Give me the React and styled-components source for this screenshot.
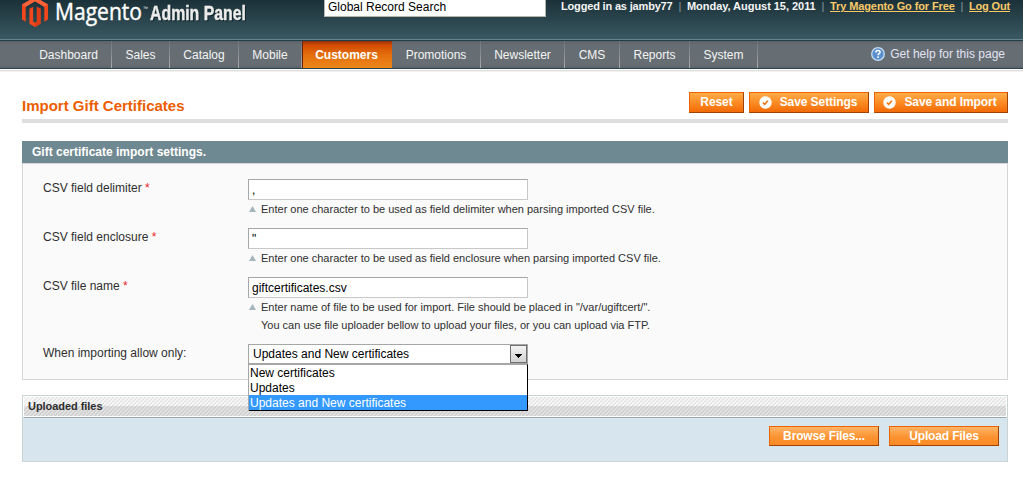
import * as React from 'react';
import styled, { createGlobalStyle } from 'styled-components';

const NAV_ITEMS = [
  { label: 'Dashboard', width: 86 },
  { label: 'Sales', width: 58 },
  { label: 'Catalog', width: 69 },
  { label: 'Mobile', width: 63 },
  { label: 'Customers', width: 90, active: true },
  { label: 'Promotions', width: 89 },
  { label: 'Newsletter', width: 84 },
  { label: 'CMS', width: 55 },
  { label: 'Reports', width: 70 },
  { label: 'System', width: 68 },
];

const OPTIONS = ['New certificates', 'Updates', 'Updates and New certificates'];

function Logo() {
  return (
    <LogoSvg viewBox="0 0 226 30" role="img">
      <g transform="translate(-2 -3) scale(1.25)">
        <path
          fill="#f1471d"
          d="M22.391 6v12l-2.969 1.714V7.713L12 3.43 4.574 7.713v12.001L1.609 18V6L12 0z"
        />
        <path fill="#f8623a" d="M12 0l10.391 6-2.969 1.713L12 3.43 4.574 7.713 1.609 6z" />
        <path
          fill="#f1471d"
          d="M12 24l-4.455-2.572v-12l2.97-1.715v12.001l1.485.902 1.485-.902V7.713l2.971 1.715v12z"
        />
        <path fill="#dc3c16" d="M12 20.616l1.485-.902V7.713l2.971 1.715v12L12 24z" />
      </g>
      <text
        x="33"
        y="20"
        fill="#fff"
        stroke="#fff"
        strokeWidth="0.4"
        fontFamily="'Open Sans', sans-serif"
        fontSize="23"
        textLength="87"
        lengthAdjust="spacingAndGlyphs"
      >
        Magento
      </text>
      <text x="121" y="10" fill="#fff" fontFamily="'Liberation Sans', sans-serif" fontSize="5">
        ™
      </text>
      <AdminText
        x="128"
        y="20"
        fontFamily="'Liberation Sans Narrow', 'Liberation Sans', sans-serif"
        fontSize="20"
        fontWeight="bold"
        textLength="96"
        lengthAdjust="spacingAndGlyphs"
      >
        Admin Panel
      </AdminText>
    </LogoSvg>
  );
}

function CheckIcon() {
  return (
    <svg width="13" height="13" viewBox="0 0 13 13">
      <circle cx="6.5" cy="6.5" r="6.2" fill="#fff" />
      <path d="M4 6.6l1.7 1.7 3.2-3.6" fill="none" stroke="#ef7a1a" strokeWidth="1.7" />
    </svg>
  );
}

function HelpIcon() {
  return (
    <HelpSvg viewBox="0 0 14 14">
      <circle cx="7" cy="7" r="6.3" fill="#5b8fcd" stroke="#c3dcf5" strokeWidth="1.3" />
      <path
        d="M4.9 5.4c0-1.4 1-2 2.1-2s2.1.7 2.1 1.8c0 1.5-2 1.5-2 3M7.1 9.3v1.6"
        fill="none"
        stroke="#fff"
        strokeWidth="1.5"
      />
    </HelpSvg>
  );
}

function TextField({ label, value, required, children }) {
  return (
    <Row>
      <Label>
        {label} {required && <Required>*</Required>}
      </Label>
      <Control>
        <Input defaultValue={value} />
        {children}
      </Control>
    </Row>
  );
}

function Hint({ children }) {
  return (
    <HintRow>
      <Triangle />
      <div>{children}</div>
    </HintRow>
  );
}

export default function App() {
  return (
    <>
      <GlobalStyle />
      <Header>
        <Logo />
        <Search defaultValue="Global Record Search" />
        <Account>
          <HeaderText $width={112} $spacing={-0.17}>
            Logged in as jamby77
          </HeaderText>
          <Pipe>|</Pipe>
          <HeaderText $width={129} $spacing={-0.04}>
            Monday, August 15, 2011
          </HeaderText>
          <Pipe>|</Pipe>
          <HeaderLink $width={125} $spacing={-0.1}>
            Try Magento Go for Free
          </HeaderLink>
          <Pipe>|</Pipe>
          <HeaderLink $width={41} $spacing={-0.17}>
            Log Out
          </HeaderLink>
        </Account>
      </Header>

      <Nav>
        {NAV_ITEMS.map(({ label, width, active }) => (
          <NavItem key={label} $width={width} $active={active}>
            {label}
          </NavItem>
        ))}
        <Help>
          <HelpIcon />
          Get help for this page
        </Help>
      </Nav>

      <Content>
        <TitleBar>
          <Title>Import Gift Certificates</Title>
          <Button $width={55}>Reset</Button>
          <Button $width={120} $icon>
            <CheckIcon />
            Save Settings
          </Button>
          <Button $width={134} $icon>
            <CheckIcon />
            Save and Import
          </Button>
        </TitleBar>

        <PanelTitle>Gift certificate import settings.</PanelTitle>
        <Panel>
          <TextField label="CSV field delimiter" value="," required>
            <Hint>Enter one character to be used as field delimiter when parsing imported CSV file.</Hint>
          </TextField>
          <TextField label="CSV field enclosure" value={'"'} required>
            <Hint>Enter one character to be used as field enclosure when parsing imported CSV file.</Hint>
          </TextField>
          <TextField label="CSV file name" value="giftcertificates.csv" required>
            <Hint>
              Enter name of file to be used for import. File should be placed in "/var/ugiftcert/".
              <br />
              You can use file uploader bellow to upload your files, or you can upload via FTP.
            </Hint>
          </TextField>
          <Row>
            <Label>When importing allow only:</Label>
            <Select>
              <SelectValue>Updates and New certificates</SelectValue>
              <SelectArrow>
                <svg width="7" height="4" viewBox="0 0 7 4" shapeRendering="crispEdges">
                  <path d="M0 0h7L3.5 4z" />
                </svg>
              </SelectArrow>
              <Menu>
                {OPTIONS.map((option, i) => (
                  <Option key={option} $selected={i === 2}>
                    {option}
                  </Option>
                ))}
              </Menu>
            </Select>
          </Row>
        </Panel>

        <Uploader>
          <UploaderTitle>Uploaded files</UploaderTitle>
          <UploaderBody>
            <Button $width={110} $flat>
              Browse Files...
            </Button>
            <Button $width={110} $flat>
              Upload Files
            </Button>
          </UploaderBody>
        </Uploader>
      </Content>
    </>
  );
}

const GlobalStyle = createGlobalStyle`
  * {
    box-sizing: border-box;
  }
  body {
    margin: 0;
    background: #fff;
    color: #2f2f2f;
    font: 12px/15px "Liberation Sans", Arial, sans-serif;
    overflow: hidden;
  }
`;

const Header = styled.header`
  display: flex;
  align-items: flex-start;
  height: 41px;
  padding: 0 13px 0 22px;
  background: linear-gradient(#1b3139, #3a5962);
  border-bottom: 1px solid #1f3e49;
  box-shadow: inset 0 -1px #66828b;
`;

const LogoSvg = styled.svg`
  flex: none;
  width: 226px;
  height: 30px;
  overflow: visible;
`;

const AdminText = styled.text`
  fill: #ececea;
  stroke: #ececea;
  stroke-width: 0.4px;
  filter: drop-shadow(1px 1px 0 #10242b);
`;

const Search = styled.input`
  flex: none;
  width: 222px;
  height: 18px;
  margin: -1px 0 0 76px;
  padding: 0 3px 2px;
  border: 1px solid #b5b5b0;
  border-top: 0;
  background: #fff;
  color: #000;
  font: 12px/14px "Liberation Sans", Arial, sans-serif;
  letter-spacing: 0;
`;

const Account = styled.div`
  display: flex;
  flex: 1;
  justify-content: flex-end;
  font-size: 11px;
  font-weight: bold;
  line-height: 13px;
  color: #f4f4f4;
`;

const HeaderText = styled.span`
  width: ${({ $width }) => $width}px;
  letter-spacing: ${({ $spacing }) => $spacing}px;
  white-space: nowrap;
`;

const HeaderLink = styled(HeaderText)`
  color: #f9c967;
  text-decoration: underline;
`;

const Pipe = styled.span`
  width: 14px;
  text-align: center;
  font-weight: normal;
  color: #899ba0;
`;

const Nav = styled.nav`
  display: flex;
  height: 31px;
  padding-left: 26px;
  background: linear-gradient(#5c6469, #666e73 4px, #666e73 24px, #5c6368 27px, #29434c 27px, #29434c 28px, #fff 28px, #fff 29px, #dedede 29px, #dedede 30px, #f1f1f1 30px);
`;

const NavItem = styled.a`
  flex: none;
  width: ${({ $width }) => $width}px;
  height: 27px;
  border-right: 1px solid;
  border-image: linear-gradient(#6b7378, #a9aeb1) 1;
  color: #f4f4f4;
  line-height: 28px;
  text-align: center;
  ${({ $active }) =>
    $active && {
      paddingRight: 2,
      border: 0,
      borderLeft: '1px solid #6d1e08',
      background: 'linear-gradient(#913005, #d24b02 4px, #e56e0c 14px, #ec881b)',
      color: '#fff',
      fontWeight: 'bold',
    }}
`;

const Help = styled.a`
  display: flex;
  align-items: center;
  gap: 5px;
  height: 27px;
  margin: 0 18px 0 auto;
  color: #e3e3f4;
`;

const HelpSvg = styled.svg`
  width: 14px;
  height: 14px;
  margin-top: -1px;
`;

const Content = styled.main`
  padding: 20px 15px 0 22px;
`;

const TitleBar = styled.div`
  display: flex;
  gap: 5px;
  height: 31px;
  border-bottom: 4px solid #dfdfdf;
`;

const Title = styled.h1`
  flex: 1;
  margin: 5px 0 0;
  color: #eb5e00;
  font-size: 15px;
  line-height: 18px;
`;

const Button = styled.button`
  display: flex;
  flex: none;
  align-items: center;
  justify-content: center;
  gap: 8px;
  width: ${({ $width }) => $width}px;
  height: ${({ $flat }) => ($flat ? 20 : 21)}px;
  padding: 0 ${({ $icon }) => ($icon ? 2 : 0)}px 1px 0;
  border: 1px solid;
  border-color: #ed6502 #a04300 #a04300 #ed6502;
  background: ${({ $flat }) =>
    $flat
      ? 'linear-gradient(#ffb567, #fb9331 10px, #fb8b24)'
      : 'linear-gradient(#ffac47, #fb8a23 10px, #f36a05)'};
  color: #fff;
  font: bold 12px/16px "Liberation Sans", Arial, sans-serif;
  letter-spacing: ${({ $flat }) => ($flat ? -0.15 : -0.08)}px;
  white-space: nowrap;
`;

const PanelTitle = styled.h2`
  height: 22px;
  margin: 18px 0 0;
  padding-left: 10px;
  background: #6f8992;
  color: #fff;
  font-size: 12px;
  line-height: 22px;
`;

const Panel = styled.section`
  height: 217px;
  padding: 15px 20px 0;
  border: 1px solid #d6d6d6;
  background: #fafafa;
`;

const Row = styled.div`
  display: flex;
  margin-bottom: 10px;
`;

const Label = styled.label`
  flex: 0 0 205px;
  padding-top: 2px;
`;

const Required = styled.span`
  color: #eb2222;
`;

const Control = styled.div`
  flex: 1;
`;

const Input = styled.input`
  display: block;
  width: 280px;
  height: 21px;
  padding: 1px 3px 0;
  border: 1px solid;
  border-color: #a6a6a6 #c8c8c8 #c8c8c8 #a6a6a6;
  border-radius: 0;
  background: #fff;
  color: #000;
  font: 12px/15px "Liberation Sans", Arial, sans-serif;
`;

const HintRow = styled.div`
  display: flex;
  gap: 5px;
  padding-left: 1px;
  font-size: 11px;
  line-height: 18px;
`;

const Triangle = styled.i`
  width: 7px;
  height: 6px;
  margin-top: 6px;
  background: #a4b6ba;
  clip-path: polygon(50% 0, 100% 100%, 0 100%);
`;

const Select = styled.div`
  position: relative;
  display: flex;
  width: 280px;
  height: 20px;
  border: 1px solid #a6a6a6;
  background: #fff;
  color: #000;
`;

const SelectValue = styled.span`
  flex: 1;
  padding: 2px 0 0 4px;
`;

const SelectArrow = styled.span`
  display: flex;
  align-items: center;
  justify-content: center;
  width: 17px;
  padding-top: 3px;
  border: 1px solid #707070;
  background: linear-gradient(#f3f3f3, #d2d2d2);
`;

const Menu = styled.div`
  position: absolute;
  top: 19px;
  left: 0;
  z-index: 1;
  width: 279px;
  border: 1px solid #000;
  border-top-color: #a6a6a6;
  border-left: 0;
  background: #fff;
  box-shadow: -1px 0 #a6a6a6;
`;

const Option = styled.div`
  height: 15px;
  padding-left: 1px;
  line-height: 17px;
  background: ${({ $selected }) => ($selected ? '#3399ff' : 'transparent')};
  color: ${({ $selected }) => ($selected ? '#fff' : '#000')};
`;

const Uploader = styled.section`
  height: 67px;
  margin-top: 15px;
  border: 1px solid #ccd3d3;
  background: #d7e5ee;
`;

const UploaderTitle = styled.h3`
  height: 22px;
  margin: 0;
  padding-left: 4px;
  border: 1px solid #fff;
  border-bottom: 1px solid #9ba9b5;
  background: linear-gradient(transparent 19px, #fff 19px),
    repeating-linear-gradient(135deg, rgba(0, 0, 0, 0.08) 0 1.41px, transparent 1.41px 2.83px),
    linear-gradient(#f8f8f8 9px, #e2e2e2 9px);
  font-size: 11px;
  letter-spacing: -0.05px;
  line-height: 19px;
`;

const UploaderBody = styled.div`
  display: flex;
  justify-content: flex-end;
  gap: 10px;
  padding: 8px 8px 0;
`;
